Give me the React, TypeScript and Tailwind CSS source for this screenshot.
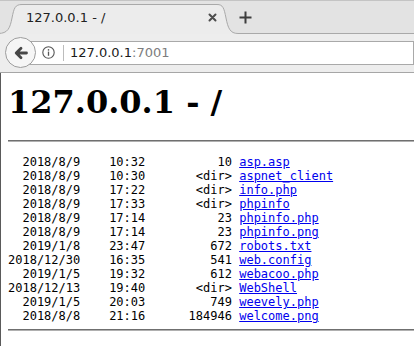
import React from 'react'

const rows = [
  ["2018/8/9", "10:32", "10", "asp.asp"],
  ["2018/8/9", "10:30", "<dir>", "aspnet_client"],
  ["2018/8/9", "17:22", "<dir>", "info.php"],
  ["2018/8/9", "17:33", "<dir>", "phpinfo"],
  ["2018/8/9", "17:14", "23", "phpinfo.php"],
  ["2018/8/9", "17:14", "23", "phpinfo.png"],
  ["2019/1/8", "23:47", "672", "robots.txt"],
  ["2018/12/30", "16:35", "541", "web.config"],
  ["2019/1/5", "19:32", "612", "webacoo.php"],
  ["2018/12/13", "19:40", "<dir>", "WebShell"],
  ["2019/1/5", "20:03", "749", "weevely.php"],
  ["2018/8/8", "21:16", "184946", "welcome.png"],
]

const TabBar = () => {
  return (
    <div className="relative h-[33px] bg-[#e3e3e3] border-t border-[#c4c4c4] font-['DejaVu_Sans',sans-serif]">
      <svg className="absolute left-0 top-0" width="414" height="33" viewBox="0 0 414 33">
        <path d="M-2 32.5 C8 32.5 10 27 12 17 C14 7 15 3.5 22 3.5 L217 3.5 C223 3.5 224 7 226 17 C228 27 230 32.5 238 32.5 L414 32.5"
          fill="#ececec" stroke="#a9a9a9" strokeWidth="1" />
      </svg>
      <div className="relative flex items-center h-full">
        <span className="ml-[26px] text-[13px] text-[#222] leading-none">127.0.0.1 - /</span>
        <svg className="ml-[103px]" width="9" height="9" viewBox="0 0 9 9">
          <path d="M1.5 1.5L7.5 7.5M7.5 1.5L1.5 7.5" stroke="#4d4d4d" strokeWidth="2" strokeLinecap="round" />
        </svg>
        <svg className="ml-[22px]" width="13" height="13" viewBox="0 0 13 13">
          <path d="M6.5 0.5V12.5M0.5 6.5H12.5" stroke="#3d3d3d" strokeWidth="2" />
        </svg>
      </div>
    </div>
  )
}

const Toolbar = () => {
  return (
    <div className="flex items-center h-[40px] bg-[#ededed] border-b border-[#a6a6a6] pl-[5px] font-['DejaVu_Sans',sans-serif]">
      <div className="relative z-10 flex items-center justify-center w-[31px] h-[31px] shrink-0 rounded-full border border-[#9d9d9d] bg-[#f6f6f6]">
        <svg width="16" height="16" viewBox="0 0 16 16">
          <path d="M13.5 8H3.5M8 3.2L3.2 8L8 12.8" fill="none" stroke="#474747" strokeWidth="2.8" strokeLinecap="round" strokeLinejoin="round" />
        </svg>
      </div>
      <div className="flex items-center flex-1 h-[24px] -ml-[8px] pl-[13px] bg-white border border-[#a9a9a9]">
        <svg width="13" height="13" viewBox="0 0 13 13">
          <circle cx="6.5" cy="6.5" r="5.7" fill="none" stroke="#555" strokeWidth="1.1" />
          <circle cx="6.5" cy="3.9" r="0.8" fill="#555" />
          <path d="M6.5 5.6V9.8" stroke="#555" strokeWidth="1.3" />
        </svg>
        <div className="ml-[8px] w-[1px] h-[16px] bg-[#bcbcbc]" />
        <span className="ml-[6px] text-[13px] leading-none text-[#1b1b1b]">
          127.0.0.1<span className="text-[#7d7d7d]">:7001</span>
        </span>
      </div>
    </div>
  )
}

const App = () => {
  return (
    <div className="w-[414px] h-[346px] overflow-hidden bg-white flex flex-col">
      <TabBar />
      <Toolbar />
      <div className="flex-1 border-l border-[#5a5a5a] pl-[7px] text-black">
        <h1 className="mt-[13px] text-[32px] leading-[32px] font-bold font-['DejaVu_Serif',serif]">127.0.0.1 - /</h1>
        <div className="mt-[22px] h-[2px] border-t border-[#6f6f6f] border-b border-b-[#b0b0b0]" />
        <pre className="mt-[13px] text-[12px] leading-[14px] font-['DejaVu_Sans_Mono',monospace]">
          {rows.map((r, i) => (
            <div key={i}>
              {r[0].padStart(10) + "    " + r[1] + r[2].padStart(12) + " "}
              <a href="#" className="text-[#0000ee] underline">{r[3]}</a>
            </div>
          ))}
        </pre>
        <div className="mt-[6px] h-[2px] border-t border-[#6f6f6f] border-b border-b-[#b0b0b0]" />
      </div>
    </div>
  )
}

export default App
